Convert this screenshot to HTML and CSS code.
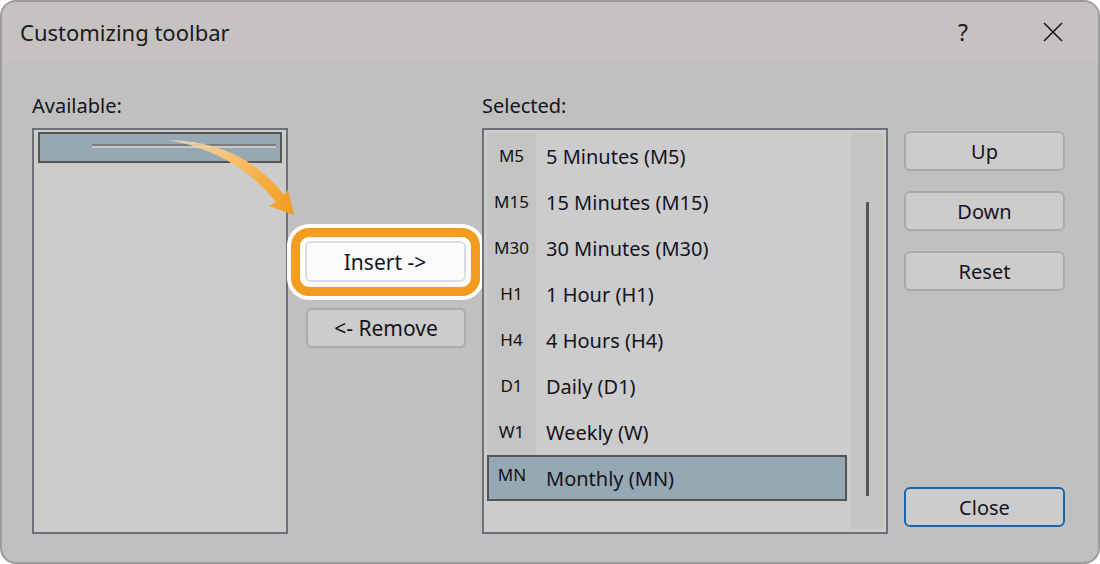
FILE: index.html
```html
<!DOCTYPE html>
<html lang="en">

<head>
    <meta charset="UTF-8">
    <meta name="viewport" content="width=device-width, initial-scale=1.0">
    <title>Customizing toolbar</title>
    <link rel="stylesheet" href="styles.css">
</head>

<body>
    <div class="dialog">
        <div class="titlebar">
            <span class="title">Customizing toolbar</span>
            <div class="title-btns">
                <span class="help">?</span>
                <span class="close-x">
                    <svg width="20" height="20" viewBox="0 0 20 20">
                        <path d="M1 1 L19 19 M19 1 L1 19" stroke="#1a1a1a" stroke-width="1.6" fill="none" />
                    </svg>
                </span>
            </div>
        </div>

        <div class="content">
            <div class="col col-avail">
                <div class="label">Available:</div>
                <div class="listbox avail-list">
                    <div class="avail-item">
                        <div class="sep"></div>
                    </div>
                </div>
            </div>

            <div class="col col-mid">
                <div class="highlight">
                    <button class="btn btn-insert">Insert -&gt;</button>
                </div>
                <button class="btn btn-remove">&lt;- Remove</button>
            </div>

            <div class="col col-sel">
                <div class="label">Selected:</div>
                <div class="listbox sel-list">
                    <div class="rows">
                        <div class="row"><span class="code">M5</span><span class="text">5 Minutes (M5)</span></div>
                        <div class="row"><span class="code">M15</span><span class="text">15 Minutes (M15)</span></div>
                        <div class="row"><span class="code">M30</span><span class="text">30 Minutes (M30)</span></div>
                        <div class="row"><span class="code">H1</span><span class="text">1 Hour (H1)</span></div>
                        <div class="row"><span class="code">H4</span><span class="text">4 Hours (H4)</span></div>
                        <div class="row"><span class="code">D1</span><span class="text">Daily (D1)</span></div>
                        <div class="row"><span class="code">W1</span><span class="text">Weekly (W)</span></div>
                        <div class="row selected"><span class="code">MN</span><span class="text">Monthly (MN)</span></div>
                    </div>
                    <div class="scroll">
                        <div class="thumb"></div>
                    </div>
                </div>
            </div>

            <div class="col col-btns">
                <button class="btn">Up</button>
                <button class="btn">Down</button>
                <button class="btn">Reset</button>
                <button class="btn btn-close">Close</button>
            </div>
        </div>

        <!-- annotation arrow -->
        <svg class="arrow" width="1100" height="564" viewBox="0 0 1100 564">
            <defs>
                <linearGradient id="arrowGrad" x1="170" y1="140" x2="290" y2="210" gradientUnits="userSpaceOnUse">
                    <stop offset="0" stop-color="#fbe7c4" stop-opacity="0.7" />
                    <stop offset="0.45" stop-color="#f8c06a" />
                    <stop offset="1" stop-color="#f39c1f" />
                </linearGradient>
            </defs>
            <path d="M168,140 Q242,141 284,195 L288,190 L294,215 L269,206 L276,202 Q236,152 168,140 Z"
                fill="url(#arrowGrad)" />
        </svg>
    </div>
</body>

</html>
```

FILE: styles.css
```css
* {
    margin: 0;
    padding: 0;
    box-sizing: border-box;
}

body {
    background: #ffffff;
    font-family: "Noto Sans", "Open Sans", sans-serif;
    font-size: 20px;
    color: #141420;
}

.dialog {
    position: relative;
    width: 1100px;
    height: 564px;
    border: 2px solid #9b9b9b;
    border-radius: 16px;
    background: #c0c0c0;
    overflow: hidden;
    display: flex;
    flex-direction: column;
}

/* title bar */
.titlebar {
    height: 60px;
    background: #c6c2c2;
    display: flex;
    align-items: center;
    justify-content: space-between;
    padding-left: 18px;
    padding-right: 35px;
}

.title {
    font-size: 22px;
    color: #1a1a1a;
}

.title-btns {
    display: flex;
    align-items: center;
    gap: 75px;
}

.help {
    font-size: 23px;
    color: #1a1a1a;
}

.close-x {
    display: flex;
}

/* main area */
.content {
    display: flex;
    padding: 32px 0 0 30px;
}

.col {
    display: flex;
    flex-direction: column;
}

.label {
    line-height: 24px;
    margin-bottom: 10px;
}

.listbox {
    height: 406px;
    border: 2px solid #6c7078;
    background: #cccccc;
}

.col-avail {
    width: 256px;
}

.avail-list {
    padding: 2px 4px;
}

.avail-item {
    height: 31px;
    border: 2px solid #555;
    background: #97a8b5;
    padding: 10px 4px 0 52px;
}

.sep {
    height: 4px;
    border-top: 2px solid #7a7c7e;
    border-bottom: 2px solid #c9c9c9;
}

/* middle buttons */
.col-mid {
    width: 194px;
    align-items: center;
    padding-top: 134px;
}

.highlight {
    border: 9px solid #f39c20;
    border-radius: 18px;
    background: #fff;
    padding: 4px 5px 5px;
    box-shadow: 0 0 0 4px #fff;
}

.btn {
    width: 161px;
    height: 40px;
    font-family: inherit;
    font-size: 20px;
    color: #141420;
    background: #cccccc;
    border: 2px solid #aaaaaa;
    border-radius: 6px;
}

.btn-insert {
    height: 41px;
    background: #fbfbfb;
    border-color: #dcdcdc;
    font-size: 21px;
}

.btn-remove {
    width: 160px;
    margin-top: 12px;
    margin-left: 2px;
    font-size: 21px;
}

/* selected list */
.col-sel {
    width: 406px;
}

.sel-list {
    display: flex;
    padding: 3px;
}

.rows {
    flex: 1;
}

.row {
    height: 46px;
    display: flex;
    align-items: center;
}

.code {
    width: 49px;
    height: 100%;
    background: #c4c4c4;
    font-size: 17px;
    line-height: 46px;
    text-align: center;
    color: #111;
}

.text {
    padding-left: 10px;
}

.row.selected {
    background: #97a8b5;
    box-shadow: inset 0 0 0 2px #555;
}

.row.selected .code {
    background: transparent;
    line-height: 40px;
    padding-left: 1px;
}

.scroll {
    width: 32px;
    margin-left: 4px;
    background: #c4c4c4;
    display: flex;
    justify-content: center;
    padding-top: 69px;
}

.thumb {
    width: 3px;
    height: 294px;
    background: #555;
}

/* right buttons */
.col-btns {
    margin-left: 16px;
    padding: 37px 0 7px;
    gap: 20px;
}

.btn-close {
    margin-top: auto;
    border-color: #1c62ae;
}

.arrow {
    position: absolute;
    top: -2px;
    left: -2px;
    pointer-events: none;
}
```
